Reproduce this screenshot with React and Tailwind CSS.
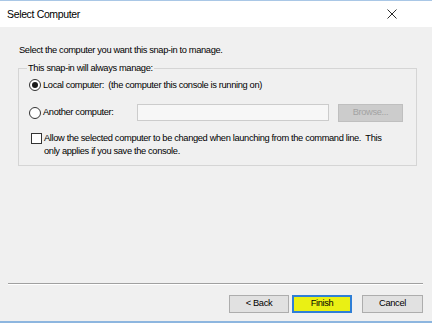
import React from 'react';

function Radio({ checked }) {
  return (
    <span className="w-[12px] h-[12px] rounded-full border border-[#333333] bg-white flex items-center justify-center shrink-0">
      {checked && <span className="w-[6px] h-[6px] rounded-full bg-[#1a1a1a]" />}
    </span>
  );
}

function Button({ children, primary, className = '' }) {
  return (
    <button
      className={
        (primary
          ? 'relative w-[60px] h-[18px] border-2 border-[#2f7fd6] bg-[#eaf014] text-[9.3px] tracking-[-0.35px] leading-none text-black '
          : 'w-[60px] h-[18px] border border-[#adadad] bg-[#e1e1e1] text-[9.3px] tracking-[-0.35px] leading-none text-black ') + className
      }
    >
      {children}
    </button>
  );
}

export default function App() {
  return (
    <div className="w-[432px] h-[323px] flex flex-col bg-[#f0f0f0] border-t border-t-[#a9c7e6] border-b-2 border-b-[#8db6df] font-['Liberation_Sans',Arial,sans-serif] text-black overflow-hidden">
      {/* Title bar */}
      <div className="h-[26px] shrink-0 bg-white flex items-center justify-between pl-[7px] pr-[35px]">
        <span className="text-[10.5px] tracking-[-0.35px] leading-none">Select Computer</span>
        <svg width="10" height="10" viewBox="0 0 10 10">
          <path d="M0.5 0.5 L9.5 9.5 M9.5 0.5 L0.5 9.5" stroke="#2b2b2b" strokeWidth="1" />
        </svg>
      </div>

      {/* Body */}
      <div className="flex-1 flex flex-col pl-[18px] text-[9.3px] tracking-[-0.35px]">
        <div className="pt-[16.5px] pl-[1px] leading-[13px]">
          Select the computer you want this snap-in to manage.
        </div>

        <fieldset className="mt-[5px] w-[399px] border border-[#d5d5d5] pl-[10px] pt-[2px] pb-[7px] leading-[13px]">
          <legend className="px-[1px] ml-[-2px]">This snap-in will always manage:</legend>

          <div className="h-[17px] flex items-center gap-[2px]">
            <Radio checked />
            <span className="whitespace-pre">Local computer:  (the computer this console is running on)</span>
          </div>

          <div className="mt-[10px] h-[18px] flex items-center">
            <Radio />
            <span className="ml-[2px] w-[94px]">Another computer:</span>
            <div className="w-[192px] h-[17px] border border-[#cccccc] bg-[#f7f7f7]" />
            <div className="ml-[9px] w-[65px] h-[18px] border border-[#bfbfbf] bg-[#cccccc] flex items-center justify-center text-[#a3a3a3]">
              Browse...
            </div>
          </div>

          <div className="mt-[10px] flex items-start">
            <span className="mt-[1.5px] ml-[2px] w-[11px] h-[11px] border border-[#333333] bg-white shrink-0" />
            <span className="ml-[2px] whitespace-pre">
              Allow the selected computer to be changed when launching from the command line.  This
              <br />
              only applies if you save the console.
            </span>
          </div>
        </fieldset>

        {/* Footer */}
        <div className="mt-auto pb-[8px]">
          <div className="ml-[-10px] w-[415px] border-t border-t-[#a0a0a0] border-b border-b-white" />
          <div className="mt-[10px] flex items-start justify-end pr-[9px]">
            <Button>&lt; Back</Button>
            <Button primary className="ml-[3px]">Finish</Button>
            <Button className="ml-[10px] w-[61px]">Cancel</Button>
          </div>
        </div>
      </div>
    </div>
  );
}
